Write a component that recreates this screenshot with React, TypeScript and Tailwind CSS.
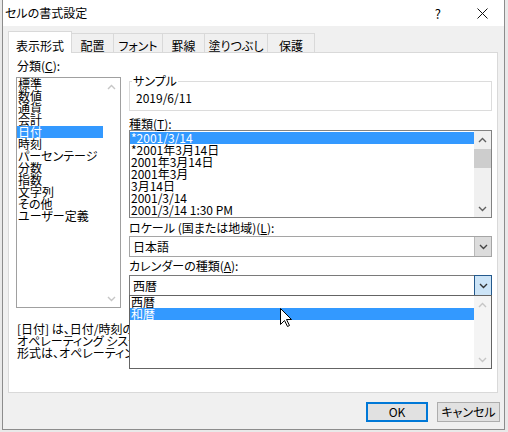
import React from "react";

const Up = ({ c }: { c: string }) => (
  <svg width="9" height="6" viewBox="0 0 9 6">
    <path d="M1 5L4.5 1.5L8 5" fill="none" stroke={c} strokeWidth="1.4" />
  </svg>
);
const Down = ({ c }: { c: string }) => (
  <svg width="9" height="6" viewBox="0 0 9 6">
    <path d="M1 1L4.5 4.5L8 1" fill="none" stroke={c} strokeWidth="1.4" />
  </svg>
);

const cats = ["標準", "数値", "通貨", "会計", "日付", "時刻", "パーセンテージ", "分数", "指数", "文字列", "その他", "ユーザー定義"];
const types = ["*2001/3/14", "*2001年3月14日", "2001年3月14日", "2001年3月", "3月14日", "2001/3/14", "2001/3/14 1:30 PM"];
const tabs = [
  { t: "配置", w: "w-[42px]" },
  { t: "フォント", w: "w-[49px]" },
  { t: "罫線", w: "w-[42px]" },
  { t: "塗りつぶし", w: "w-[63px]" },
  { t: "保護", w: "w-[47px]" },
];

export default function App() {
  return (
    <div className="relative w-[508px] h-[432px] bg-[#e9e9e9] overflow-hidden [font-family:'Noto_Sans_CJK_JP',sans-serif] [font-feature-settings:'palt'] text-[12px] leading-[12px] text-black">
      <div className="ml-[2px] w-[503px] h-[430px] border-x border-b border-[#8c8c8c] bg-[#f0f0f0] flex flex-col">
        {/* title bar */}
        <div className="h-[26px] shrink-0 bg-white flex items-center pl-[2px]">
          <span>セルの書式設定</span>
          <span className="ml-auto text-[13px] leading-[13px]">?</span>
          <svg className="ml-[36px] mr-[16px]" width="11" height="11" viewBox="0 0 11 11">
            <path d="M0.5 0.5L10.5 10.5M10.5 0.5L0.5 10.5" stroke="#111" strokeWidth="1" fill="none" />
          </svg>
        </div>

        {/* tabs */}
        <div className="h-[26px] shrink-0 flex items-end pl-[5px]">
          <div className="relative z-10 -mb-[1px] w-[64px] h-[22px] bg-white border-l border-t border-r border-[#d9d9d9] flex justify-center pt-[8px]">
            表示形式
          </div>
          {tabs.map((t) => (
            <div key={t.t} className={`${t.w} h-[19px] border-t border-r border-[#d9d9d9] flex justify-center pt-[6px]`}>
              {t.t}
            </div>
          ))}
        </div>

        {/* panel */}
        <div className="mx-[5px] w-[490px] h-[341px] shrink-0 border border-[#d9d9d9] bg-white pl-[7px] overflow-hidden">
          <div className="flex gap-[8px]">
            {/* left column */}
            <div className="w-[105px] pt-[7px]">
              <div className="ml-[1px] h-[12px]">
                分類(<span className="underline">C</span>):
              </div>
              <div className="mt-[5px] h-[231px] border border-[#a0a0a0] bg-white flex">
                <div className="flex-1 overflow-hidden">
                  {cats.map((c, i) => (
                    <div
                      key={c}
                      className={i === 4 ? "h-[12px] pl-[1px] whitespace-nowrap bg-[#3399ff] text-white" : "h-[12px] pl-[1px] whitespace-nowrap"}
                    >
                      {c}
                    </div>
                  ))}
                </div>
                <div className="w-[17px] flex flex-col justify-between bg-white">
                  <div className="h-[17px] flex items-center justify-center">
                    <Up c="#c6c6c6" />
                  </div>
                  <div className="h-[17px] flex items-center justify-center">
                    <Down c="#c6c6c6" />
                  </div>
                </div>
              </div>
            </div>

            {/* right column */}
            <div className="w-[363px] pt-[22px]">
              <fieldset className="border border-[#dcdcdc]">
                <legend className="ml-[2px] px-[1px] h-[12px]">サンプル</legend>
                <div className="pt-[5px] pb-[6px] pl-[6px] h-[23px]">2019/6/11</div>
              </fieldset>

              <div className="mt-[7px] h-[12px]">
                種類(<span className="underline">T</span>):
              </div>
              <div className="h-[88px] border border-[#828282] bg-white flex">
                <div className="flex-1 pt-[1px] overflow-hidden">
                  {types.map((t, i) => (
                    <div
                      key={t}
                      className={i === 0 ? "h-[12px] pl-[1px] whitespace-pre bg-[#3399ff] text-white" : "h-[12px] pl-[1px] whitespace-pre"}
                    >
                      {t}
                    </div>
                  ))}
                </div>
                <div className="w-[17px] flex flex-col bg-[#f0f0f0]">
                  <div className="h-[18px] flex items-center justify-center">
                    <Up c="#606060" />
                  </div>
                  <div className="h-[19px] bg-[#cdcdcd]" />
                  <div className="flex-1" />
                  <div className="h-[17px] flex items-center justify-center">
                    <Down c="#606060" />
                  </div>
                </div>
              </div>

              <div className="mt-[4px] h-[12px] whitespace-nowrap">
                ロケール (国または地域)(<span className="underline">L</span>):
              </div>
              <div className="mt-[2px] h-[21px] border border-[#a5a5a5] bg-white flex">
                <div className="flex-1 flex items-center pl-[3px]">日本語</div>
                <div className="w-[17px] bg-[#dcdcdc] border-l border-[#b9b9b9] flex items-center justify-center">
                  <Down c="#444444" />
                </div>
              </div>

              <div className="mt-[3px] h-[12px] whitespace-nowrap">
                カレンダーの種類(<span className="underline">A</span>):
              </div>
              <div className="relative mt-[3px]">
                <div className="h-[21px] border border-[#7a7a7a] bg-white flex">
                  <div className="flex-1 flex items-center pl-[3px]">西暦</div>
                  <div className="-my-[1px] -mr-[1px] w-[18px] bg-[#cce4f7] border border-[#24598c] flex items-center justify-center">
                    <Down c="#333333" />
                  </div>
                </div>
                {/* open dropdown list */}
                <div className="absolute z-20 left-0 top-[20px] w-[363px] h-[74px] border border-[#646464] bg-white flex">
                  <div className="flex-1 pt-0">
                    <div className="h-[12px] pl-[1px]">西暦</div>
                    <div className="h-[12px] pl-[1px] bg-[#3399ff] text-white">和暦</div>
                  </div>
                  <div className="w-[17px] flex flex-col justify-between bg-[#f4f4f4]">
                    <div className="h-[17px] flex items-center justify-center">
                      <Up c="#c6c6c6" />
                    </div>
                    <div className="h-[17px] flex items-center justify-center">
                      <Down c="#c6c6c6" />
                    </div>
                  </div>
                </div>
              </div>
            </div>
          </div>

          {/* description */}
          <div className="mt-[15px] pl-[1px] overflow-hidden">
            <div className="h-[12px] whitespace-nowrap">[日付] は、日付/時刻のシリアル値を日付形式で表示します。</div>
            <div className="h-[12px] whitespace-nowrap">オペレーティング システムで指定される地域の日付/時刻の設定の変更に応じて変わります。</div>
            <div className="h-[12px] whitespace-nowrap">形式は、オペレーティング システムの設定に影響されません。</div>
          </div>
        </div>

        {/* buttons */}
        <div className="mt-[9px] flex justify-end gap-[9px] pr-[4px]">
          <div className="w-[62px] h-[20px] border-2 border-[#0078d7] bg-[#e1e1e1] flex items-center justify-center">OK</div>
          <div className="w-[63px] h-[20px] border border-[#adadad] bg-[#e1e1e1] flex items-center justify-center">キャンセル</div>
        </div>
      </div>

      {/* mouse cursor */}
      <svg className="absolute left-[280px] top-[308px] z-30" width="13" height="20" viewBox="0 0 13 20">
        <path d="M0.5 0.5V16.5L4.5 12.5L7.5 18.5L9.5 17.5L6.5 11.5H11.5Z" fill="white" stroke="black" strokeWidth="1" />
      </svg>
    </div>
  );
}
